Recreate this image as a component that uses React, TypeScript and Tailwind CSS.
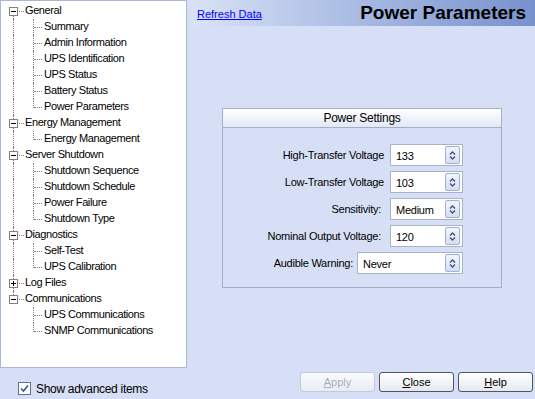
import React from 'react';

type Row = {
  t: string;
  root?: boolean;
  first?: boolean;
  lastRoot?: boolean;
  collapsed?: boolean;
  last?: boolean;
  underLast?: boolean;
};

const rows: Row[] = [
  { t: 'General', root: true, first: true },
  { t: 'Summary' },
  { t: 'Admin Information' },
  { t: 'UPS Identification' },
  { t: 'UPS Status' },
  { t: 'Battery Status' },
  { t: 'Power Parameters', last: true },
  { t: 'Energy Management', root: true },
  { t: 'Energy Management', last: true },
  { t: 'Server Shutdown', root: true },
  { t: 'Shutdown Sequence' },
  { t: 'Shutdown Schedule' },
  { t: 'Power Failure' },
  { t: 'Shutdown Type', last: true },
  { t: 'Diagnostics', root: true },
  { t: 'Self-Test' },
  { t: 'UPS Calibration', last: true },
  { t: 'Log Files', root: true, collapsed: true },
  { t: 'Communications', root: true, lastRoot: true },
  { t: 'UPS Communications', underLast: true },
  { t: 'SNMP Communications', underLast: true, last: true },
];

function TreeRow({ r }: { r: Row }) {
  if (r.root) {
    return (
      <div className="relative h-[16px] leading-[15px] pl-[24px] text-black">
        {!r.first && (
          <span className="absolute left-[12px] top-0 h-[4px] border-l border-dotted border-[#808080]" />
        )}
        {!r.lastRoot && (
          <span className="absolute left-[12px] top-[13px] h-[3px] border-l border-dotted border-[#808080]" />
        )}
        <span className="absolute left-[8px] top-[4px] w-[9px] h-[9px] border border-[#808080] bg-white">
          <span className="absolute left-[1px] top-[3px] w-[5px] h-px bg-black" />
          {r.collapsed && <span className="absolute left-[3px] top-[1px] w-px h-[5px] bg-black" />}
        </span>
        <span className="absolute left-[18px] top-[8px] w-[5px] border-t border-dotted border-[#808080]" />
        {r.t}
      </div>
    );
  }
  return (
    <div className="relative h-[16px] leading-[15px] pl-[43px] text-black">
      {!r.underLast && (
        <span className="absolute left-[12px] top-0 h-[16px] border-l border-dotted border-[#808080]" />
      )}
      <span
        className={
          r.last
            ? 'absolute left-[32px] top-0 h-[9px] border-l border-dotted border-[#808080]'
            : 'absolute left-[32px] top-0 h-[16px] border-l border-dotted border-[#808080]'
        }
      />
      <span className="absolute left-[33px] top-[8px] w-[8px] border-t border-dotted border-[#808080]" />
      {r.t}
    </div>
  );
}

function Spinner() {
  return (
    <span className="absolute right-[2px] top-[1px] w-[15px] h-[18px] rounded-[2px] border border-[#9fb0d6] bg-gradient-to-b from-[#f2f5fc] to-[#d5dff3] flex items-center justify-center">
      <svg width="7" height="9" viewBox="0 0 7 9">
        <path d="M1 3.5 L3.5 1 L6 3.5" stroke="#3e4f7a" strokeWidth="1.3" fill="none" />
        <path d="M1 5.5 L3.5 8 L6 5.5" stroke="#3e4f7a" strokeWidth="1.3" fill="none" />
      </svg>
    </span>
  );
}

function Field({ label, value, gap, wide }: { label: string; value: string; gap: string; wide?: boolean }) {
  return (
    <div className={`flex items-center justify-end h-[22px] ${gap}`}>
      <span className="text-black">{label}</span>
      <div
        className={`relative h-[22px] ${wide ? 'w-[106px]' : 'w-[73px]'} border border-[#a9b3c6] bg-white flex items-center pl-[5px] text-black`}
      >
        <span className="pt-[2px]">{value}</span>
        <Spinner />
      </div>
    </div>
  );
}

function Btn({ label, disabled }: { label: string; disabled?: boolean }) {
  return (
    <button
      className={
        disabled
          ? 'w-[75px] h-[20px] rounded-[3px] border border-[#c3cad9] bg-gradient-to-b from-[#fafbfd] to-[#e9ecf3] text-[#a7adb8] leading-[18px]'
          : 'w-[75px] h-[20px] rounded-[3px] border border-[#4a5566] bg-gradient-to-b from-[#ffffff] to-[#e6e8ee] text-black leading-[18px]'
      }
    >
      <span className="underline underline-offset-1">{label[0]}</span>
      {label.slice(1)}
    </button>
  );
}

export default function App() {
  return (
    <div className="w-[535px] h-[399px] bg-[#d6dff5] flex overflow-hidden font-['Liberation_Sans',Arial,sans-serif] text-[11px] tracking-[-0.25px]">
      {/* Left column */}
      <div className="w-[192px] flex flex-col">
        <div className="w-[187px] h-[368px] bg-white border border-[#a9b6d4] pt-[2px] tracking-[-0.4px]">
          {rows.map((r, i) => (
            <TreeRow key={i} r={r} />
          ))}
        </div>
        <div className="flex items-center mt-[13px] pl-[18px] gap-[5px]">
          <span className="w-[13px] h-[13px] border border-[#5a6f9e] bg-white flex items-center justify-center">
            <svg width="9" height="9" viewBox="0 0 9 9">
              <path d="M1 4.5 L3.5 7 L8 1.5" stroke="#3b4fa8" strokeWidth="1.6" fill="none" />
            </svg>
          </span>
          <span className="text-black text-[12px] tracking-[-0.3px] leading-[13px] pt-[2px]">Show advanced items</span>
        </div>
      </div>

      {/* Right column */}
      <div className="flex-1 flex flex-col">
        <div className="h-[26px] flex items-center justify-between bg-gradient-to-r from-[#d9e2f6] to-[#7791cd] pl-[5px] pr-[9px]">
          <a className="text-[#0000ff] underline text-[11px] tracking-[0px] pt-[3px]" href="#">
            Refresh Data
          </a>
          <span className="text-black font-bold text-[19px] tracking-[0px] leading-[26px]">Power Parameters</span>
        </div>

        <div className="flex-1 pt-[82px] pl-[30px]">
          <div className="w-[280px] h-[180px] border border-[#a4aec6]">
            <div className="h-[19px] border-b border-[#a4aec6] bg-gradient-to-b from-[#ffffff] to-[#e3e8f5] flex items-center justify-center text-black text-[12px]">
              Power Settings
            </div>
            <div className="flex flex-col gap-[5px] pt-[16px] pr-[38px]">
              <Field label="High-Transfer Voltage" value="133" gap="gap-[6px]" />
              <Field label="Low-Transfer Voltage" value="103" gap="gap-[6px]" />
              <Field label="Sensitivity:" value="Medium" gap="gap-[9px]" />
              <Field label="Nominal Output Voltage:" value="120" gap="gap-[9px]" />
              <Field label="Audible Warning:" value="Never" gap="gap-[4px]" wide />
            </div>
          </div>
        </div>

        <div className="flex justify-end gap-[4px] pr-[2px] pb-[7px] tracking-[0px]">
          <Btn label="Apply" disabled />
          <Btn label="Close" />
          <Btn label="Help" />
        </div>
      </div>
    </div>
  );
}
